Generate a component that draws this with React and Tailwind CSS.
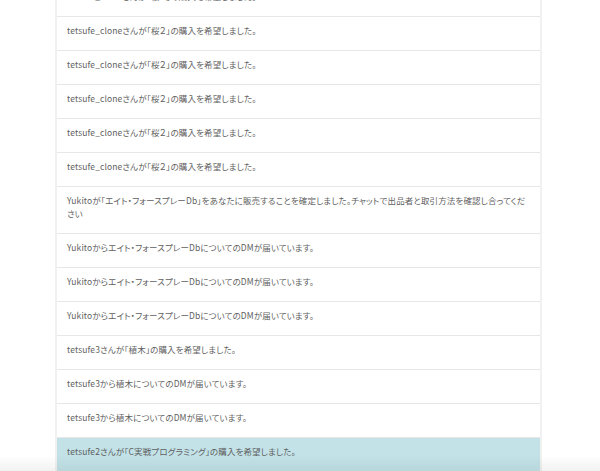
import React from 'react';

const rows = [
    'tetsufe_cloneさんが「桜２」の購入を希望しました。',
    'tetsufe_cloneさんが「桜２」の購入を希望しました。',
    'tetsufe_cloneさんが「桜２」の購入を希望しました。',
    'tetsufe_cloneさんが「桜２」の購入を希望しました。',
    'tetsufe_cloneさんが「桜２」の購入を希望しました。',
    'tetsufe_cloneさんが「桜２」の購入を希望しました。',
    'Yukitoが「エイト・フォースプレーDb」をあなたに販売することを確定しました。チャットで出品者と取引方法を確認し合ってください',
    'Yukitoからエイト・フォースプレーDbについてのDMが届いています。',
    'Yukitoからエイト・フォースプレーDbについてのDMが届いています。',
    'Yukitoからエイト・フォースプレーDbについてのDMが届いています。',
    'tetsufe3さんが「植木」の購入を希望しました。',
    'tetsufe3から植木についてのDMが届いています。',
    'tetsufe3から植木についてのDMが届いています。',
];

function NoticeRow({ text, active }) {
    return (
        <li
            className={`border-t border-[#e7e7e7] px-[10px] pt-[7px] pb-[13px] ${active ? 'bg-[#c2e2e7]' : 'bg-white'}`}
        >
            <p className="text-[8.5px] leading-[13px] tracking-[0.12px] text-[#5f5f5f] [font-feature-settings:'palt']">{text}</p>
        </li>
    );
}

export default function App() {
    return (
        <div
            className="relative h-[471px] overflow-hidden bg-white"
            style={{ fontFamily: '"Noto Sans CJK JP", "Liberation Sans", sans-serif' }}
        >
            <ul className="ml-[55px] w-[487px] -mt-[18px] border-x-2 border-[#f1f1f1]">
                {rows.map((text, i) => (
                    <NoticeRow key={i} text={text} />
                ))}
                <NoticeRow text="tetsufe2さんが「C実戦プログラミング」の購入を希望しました。" active />
            </ul>
            <div className="pointer-events-none absolute bottom-0 left-0 right-0 h-[16px] bg-gradient-to-b from-transparent to-[#0000000d]" />
        </div>
    );
}
